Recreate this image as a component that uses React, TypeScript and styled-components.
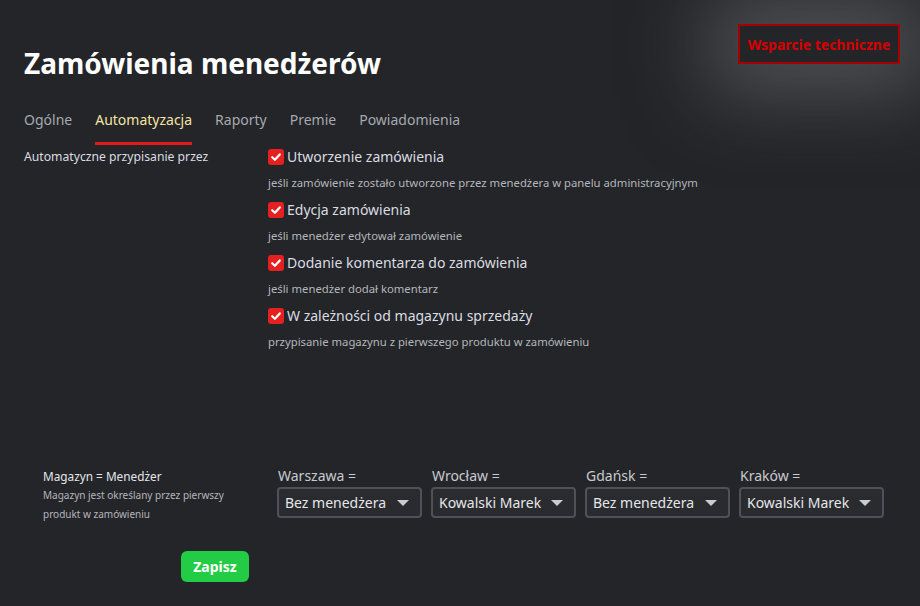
import React from "react";
import styled, { createGlobalStyle } from "styled-components";

const Global = createGlobalStyle`
  html, body { margin: 0; padding: 0; background: #242528; }
  body { font-family: "Noto Sans", "Open Sans", sans-serif; color: #d9dce2; }
  * { box-sizing: border-box; }
`;

const Page = styled.div`
  width: 920px;
  height: 606px;
  overflow: hidden;
  background: #242528;
  padding: 0 0 0 24px;
`;

const Header = styled.header`
  display: flex;
  justify-content: space-between;
  align-items: flex-start;
  padding-top: 24px;
  padding-right: 20px;
`;

const Title = styled.h1`
  margin: 21px 0 0;
  font-size: 28px;
  line-height: 36px;
  font-weight: 700;
  color: #ffffff;
`;

const SupportButton = styled.button`
  width: 162px;
  height: 40px;
  padding: 0;
  background: #242528;
  border: 2px solid #a40000;
  color: #d40000;
  font-family: inherit;
  font-size: 14px;
  font-weight: 700;
  box-shadow: 0 0 80px 30px rgba(120, 121, 126, 0.52);
  cursor: pointer;
`;

const Tabs = styled.nav`
  display: flex;
  gap: 23px;
  margin-top: 29px;
`;

const Tab = styled.div<{ $active?: boolean }>`
  font-size: 14px;
  line-height: 20px;
  padding-bottom: 12px;
  color: ${(p) => (p.$active ? "#f4e4a4" : "#a6a9b0")};
  border-bottom: 3px solid ${(p) => (p.$active ? "#e41b1b" : "transparent")};
`;

const Section = styled.section`
  display: flex;
  padding-top: 1px;
`;

const SideLabel = styled.div`
  width: 244px;
  font-size: 12.2px;
  line-height: 22px;
  color: #d9dce2;
`;

const Options = styled.div`
  display: flex;
  flex-direction: column;
  gap: 6px;
`;

const Option = styled.div`
  display: flex;
  flex-direction: column;
`;

const OptionLabel = styled.label`
  display: flex;
  align-items: center;
  gap: 3px;
  font-size: 14px;
  line-height: 22px;
  color: #d9dce2;
`;

const Check = styled.span`
  width: 16px;
  height: 16px;
  border-radius: 3px;
  background: #e52020;
  display: inline-flex;
  align-items: center;
  justify-content: center;
  flex: none;
`;

const OptionHint = styled.div`
  margin-top: 5px;
  font-size: 11.3px;
  line-height: 20px;
  color: #b3b6bc;
`;

const MappingRow = styled.section`
  display: flex;
  margin-top: 114px;
  padding-left: 19px;
`;

const MappingInfo = styled.div`
  width: 234px;
`;

const MappingTitle = styled.div`
  font-size: 11.8px;
  line-height: 20px;
  color: #e3e5ea;
`;

const MappingHint = styled.div`
  width: 200px;
  font-size: 10px;
  line-height: 19px;
  color: #b3b6bc;
`;

const Selects = styled.div`
  display: flex;
  gap: 9px;
`;

const Field = styled.div`
  display: flex;
  flex-direction: column;
  width: 145px;
`;

const FieldLabel = styled.div`
  font-size: 14px;
  line-height: 20px;
  color: #c7cad0;
  padding-left: 1px;
`;

const SelectBox = styled.div`
  margin-top: 1px;
  height: 31px;
  border: 2px solid #4f5156;
  border-radius: 4px;
  background: #2a2b2f;
  display: flex;
  align-items: center;
  justify-content: space-between;
  padding: 0 11px 0 6px;
  font-size: 14px;
  color: #e4e6ea;
`;

const Arrow = styled.span`
  width: 0;
  height: 0;
  border-left: 6px solid transparent;
  border-right: 6px solid transparent;
  border-top: 6px solid #c9ccd2;
`;

const Footer = styled.div`
  padding-left: 157px;
  margin-top: 27px;
`;

const SaveButton = styled.button`
  width: 68px;
  height: 31px;
  border: none;
  border-radius: 6px;
  background: #22cc44;
  color: #ffffff;
  font-family: inherit;
  font-size: 14px;
  font-weight: 700;
  cursor: pointer;
`;

const CheckIcon = () => (
  <svg width="12" height="12" viewBox="0 0 12 12">
    <path d="M2.2 6.2 L4.9 8.8 L9.8 3.4" fill="none" stroke="#fff" strokeWidth="2.2" strokeLinecap="round" strokeLinejoin="round" />
  </svg>
);

const options = [
  ["Utworzenie zamówienia", "jeśli zamówienie zostało utworzone przez menedżera w panelu administracyjnym"],
  ["Edycja zamówienia", "jeśli menedżer edytował zamówienie"],
  ["Dodanie komentarza do zamówienia", "jeśli menedżer dodał komentarz"],
  ["W zależności od magazynu sprzedaży", "przypisanie magazynu z pierwszego produktu w zamówieniu"],
];

const stores = [
  ["Warszawa =", "Bez menedżera"],
  ["Wrocław =", "Kowalski Marek"],
  ["Gdańsk =", "Bez menedżera"],
  ["Kraków =", "Kowalski Marek"],
];

export default function App() {
  return (
    <Page>
      <Global />
      <Header>
        <Title>Zamówienia menedżerów</Title>
        <SupportButton>Wsparcie techniczne</SupportButton>
      </Header>
      <Tabs>
        <Tab>Ogólne</Tab>
        <Tab $active>Automatyzacja</Tab>
        <Tab>Raporty</Tab>
        <Tab>Premie</Tab>
        <Tab>Powiadomienia</Tab>
      </Tabs>
      <Section>
        <SideLabel>Automatyczne przypisanie przez</SideLabel>
        <Options>
          {options.map(([label, hint]) => (
            <Option key={label}>
              <OptionLabel>
                <Check>
                  <CheckIcon />
                </Check>
                {label}
              </OptionLabel>
              <OptionHint>{hint}</OptionHint>
            </Option>
          ))}
        </Options>
      </Section>
      <MappingRow>
        <MappingInfo>
          <MappingTitle>Magazyn = Menedżer</MappingTitle>
          <MappingHint>Magazyn jest określany przez pierwszy produkt w zamówieniu</MappingHint>
        </MappingInfo>
        <Selects>
          {stores.map(([label, value]) => (
            <Field key={label}>
              <FieldLabel>{label}</FieldLabel>
              <SelectBox>
                {value}
                <Arrow />
              </SelectBox>
            </Field>
          ))}
        </Selects>
      </MappingRow>
      <Footer>
        <SaveButton>Zapisz</SaveButton>
      </Footer>
    </Page>
  );
}
